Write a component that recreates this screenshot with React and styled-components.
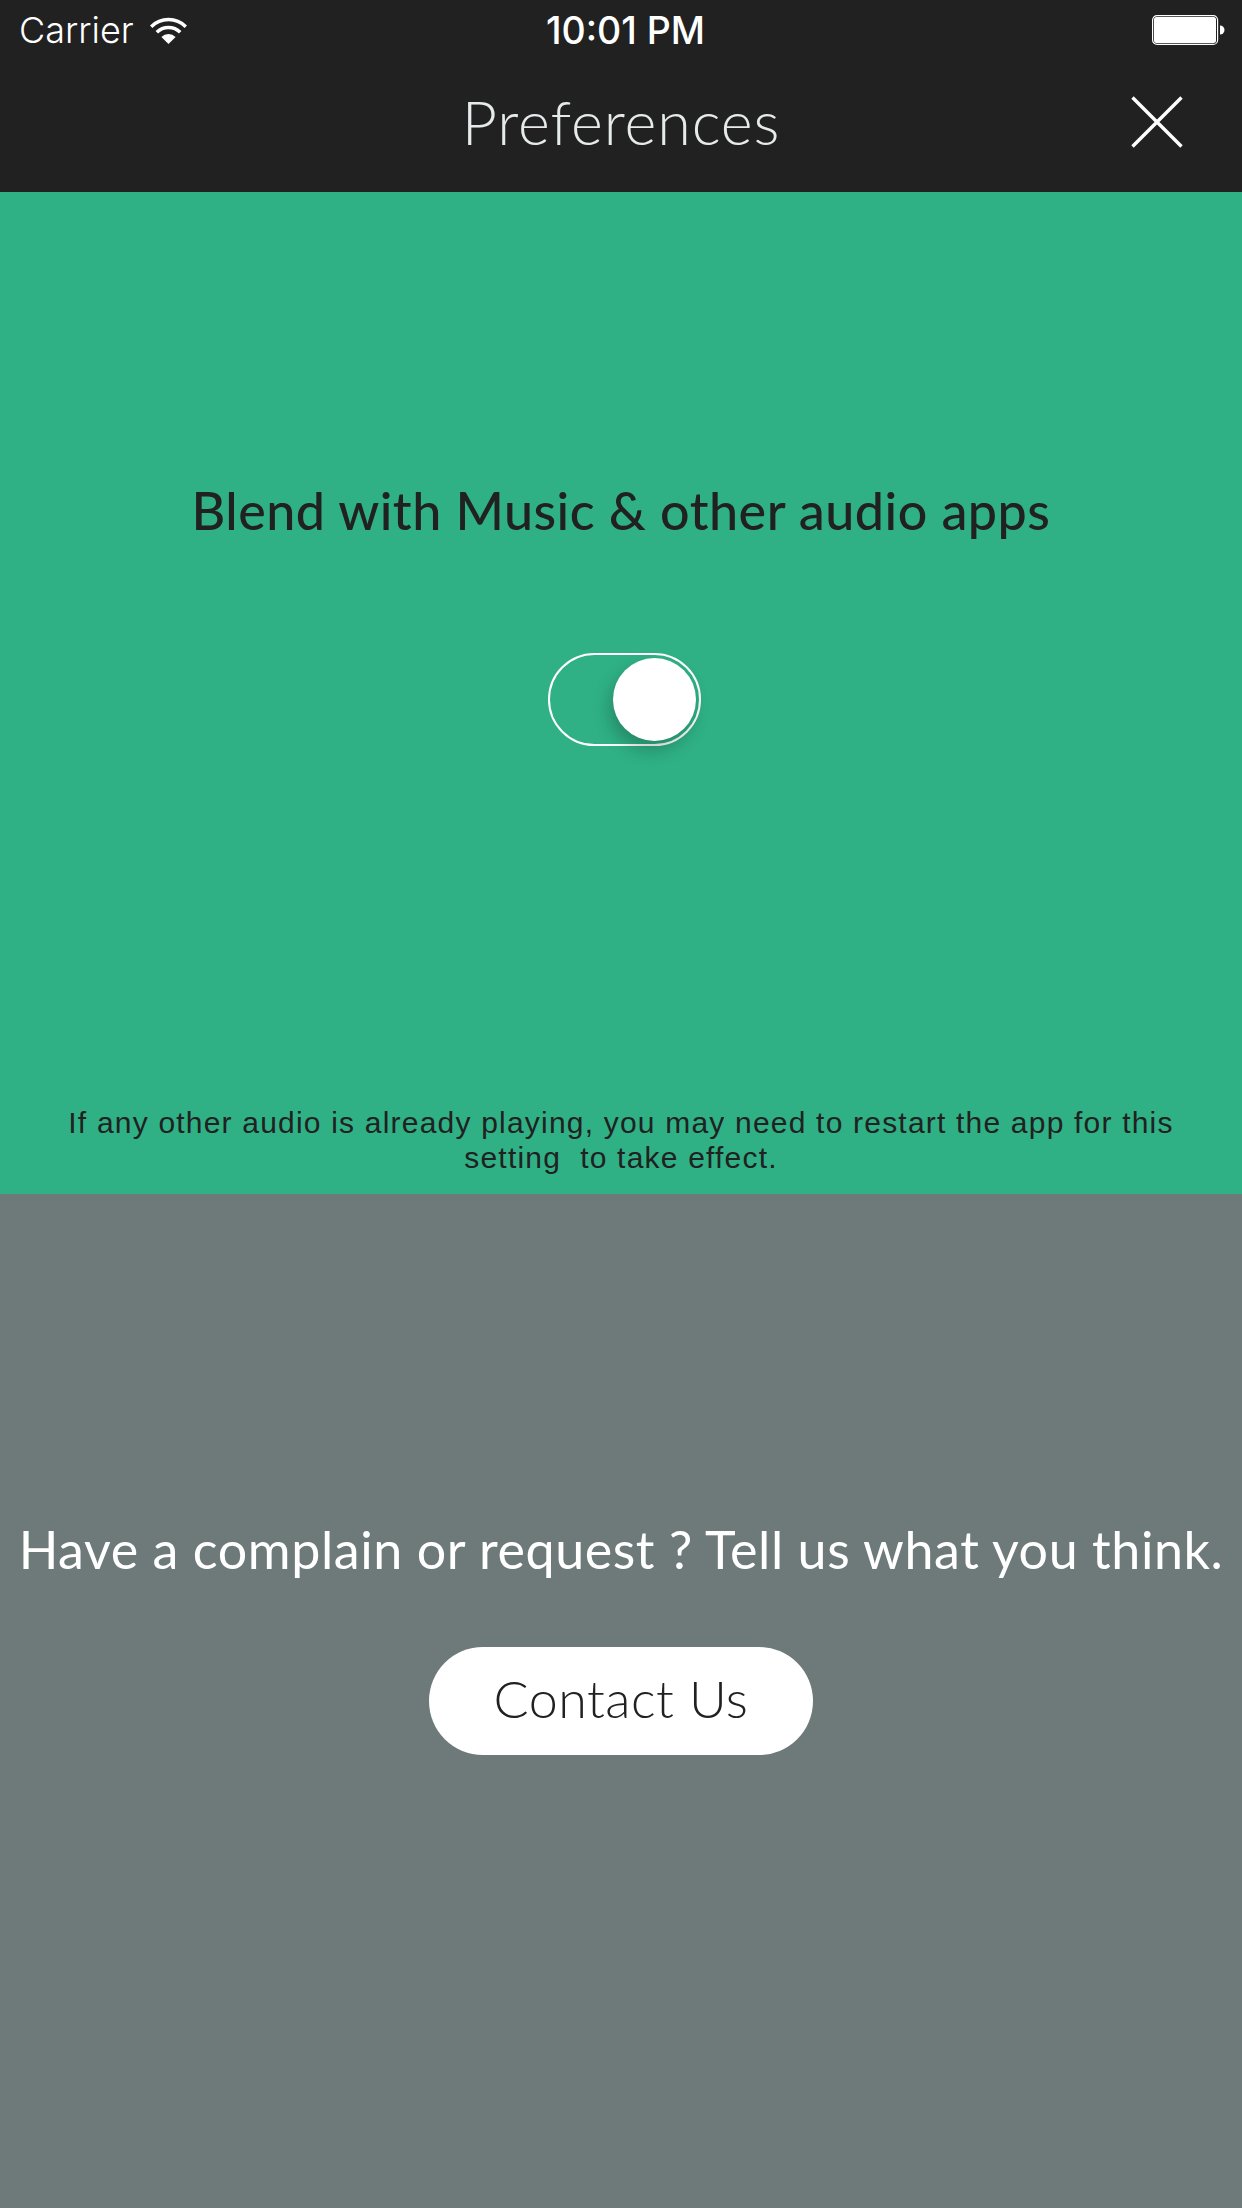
import React from "react";
import styled, { createGlobalStyle } from "styled-components";

const GlobalStyle = createGlobalStyle`
  html, body {
    margin: 0;
    padding: 0;
    background: #6e7979;
  }
`;

const Screen = styled.div`
  width: 1242px;
  height: 2208px;
  display: flex;
  flex-direction: column;
  font-family: "Lato", "Liberation Sans", sans-serif;
`;

const Header = styled.header`
  height: 192px;
  flex-shrink: 0;
  background: #212121;
  color: #fff;
  display: flex;
  flex-direction: column;
`;

const StatusBar = styled.div`
  height: 60px;
  padding: 0 17px 0 19px;
  display: grid;
  grid-template-columns: 1fr auto 1fr;
  align-items: center;
  font-family: "Inter", "Liberation Sans", sans-serif;
  font-size: 36px;
`;

const StatusLeft = styled.div`
  display: flex;
  align-items: center;
  gap: 16px;
  font-weight: 300;
`;

const StatusTime = styled.div`
  margin-left: 7px;
  font-size: 37.5px;
  font-weight: 500;
`;

const StatusRight = styled.div`
  display: flex;
  justify-content: flex-end;
`;

const NavBar = styled.div`
  flex: 1;
  display: flex;
  align-items: center;
  justify-content: center;
  position: relative;
`;

const Title = styled.h1`
  margin: 0 0 10px;
  font-size: 61px;
  font-weight: 300;
  color: #e6eaea;
  letter-spacing: 0.9px;
`;

const CloseButton = styled.button`
  position: absolute;
  right: 59px;
  top: 36px;
  width: 52px;
  height: 52px;
  padding: 0;
  border: 0;
  background: none;
`;

const ToggleSection = styled.section`
  height: 1002px;
  flex-shrink: 0;
  background: #2fb185;
  display: flex;
  flex-direction: column;
  align-items: center;
  color: #212121;
`;

const Heading = styled.h2`
  margin: 285px 0 0;
  height: 66px;
  line-height: 66px;
  font-size: 52px;
  font-weight: 500;
  letter-spacing: 0.5px;
`;

const Toggle = styled.div`
  width: 153px;
  height: 93px;
  margin: 110px 0 0 6px;
  box-sizing: border-box;
  border: 2px solid #fff;
  border-radius: 47px;
  display: flex;
  align-items: center;
  justify-content: flex-end;
  padding-right: 3px;
`;

const Knob = styled.div`
  width: 83px;
  height: 83px;
  border-radius: 50%;
  background: #fff;
  box-shadow: -3px 9px 18px rgba(0, 0, 0, 0.24);
`;

const Note = styled.p`
  margin: auto 0 0;
  padding: 0 40px 19px;
  font-family: "Liberation Sans", Arial, sans-serif;
  font-size: 30px;
  line-height: 35px;
  letter-spacing: 1.2px;
  text-align: center;
  white-space: pre-wrap;
`;

const ContactSection = styled.section`
  flex: 1;
  background: #6e7979;
  display: flex;
  flex-direction: column;
  align-items: center;
`;

const Prompt = styled.h2`
  margin: 322px 0 0;
  height: 66px;
  line-height: 66px;
  font-size: 52px;
  font-weight: 400;
  color: #fff;
  letter-spacing: 0.57px;
  white-space: nowrap;
`;

const ContactButton = styled.button`
  width: 384px;
  height: 108px;
  margin-top: 65px;
  padding: 0 0 6px;
  border: 0;
  border-radius: 54px;
  background: #fff;
  color: #212121;
  font-family: inherit;
  font-size: 52px;
  font-weight: 300;
  letter-spacing: 0.5px;
`;

const WifiIcon = () => (
  <svg width="37" height="27" viewBox="0 0 37 27">
    <path d="M18.5 27 11.4 19.9A10 10 0 0 1 25.6 19.9Z" fill="#fff" />
    <path
      d="M6.8 15.3A16.5 16.5 0 0 1 30.2 15.3M1.2 9.7A24.5 24.5 0 0 1 35.8 9.7"
      fill="none"
      stroke="#fff"
      strokeWidth="3.5"
    />
  </svg>
);

const BatteryIcon = () => (
  <svg width="73" height="30" viewBox="0 0 73 30">
    <rect x="0.6" y="0.6" width="65" height="28.8" rx="4.5" fill="none" stroke="#fff" strokeWidth="1.2" />
    <rect x="2" y="2" width="62" height="26" rx="2.5" fill="#fff" />
    <path d="M68 10.5a4.5 4.5 0 0 1 0 9Z" fill="#fff" />
  </svg>
);

const CloseIcon = () => (
  <svg width="52" height="52" viewBox="0 0 52 52">
    <path d="M1.5 1.5 50.5 50.5M50.5 1.5 1.5 50.5" stroke="#fff" strokeWidth="3.4" fill="none" />
  </svg>
);

const App = () => {
  return (
    <Screen>
      <GlobalStyle />
      <Header>
        <StatusBar>
          <StatusLeft>
            Carrier
            <WifiIcon />
          </StatusLeft>
          <StatusTime>10:01 PM</StatusTime>
          <StatusRight>
            <BatteryIcon />
          </StatusRight>
        </StatusBar>
        <NavBar>
          <Title>Preferences</Title>
          <CloseButton>
            <CloseIcon />
          </CloseButton>
        </NavBar>
      </Header>
      <ToggleSection>
        <Heading>Blend with Music &amp; other audio apps</Heading>
        <Toggle>
          <Knob />
        </Toggle>
        <Note>
          {"If any other audio is already playing, you may need to restart the app for this\nsetting  to take effect."}
        </Note>
      </ToggleSection>
      <ContactSection>
        <Prompt>Have a complain or request ? Tell us what you think.</Prompt>
        <ContactButton>Contact Us</ContactButton>
      </ContactSection>
    </Screen>
  );
};

export default App;
